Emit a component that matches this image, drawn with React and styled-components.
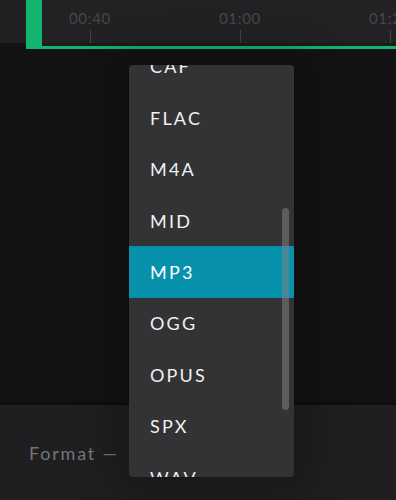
import React, { useLayoutEffect, useRef } from "react";
import styled, { createGlobalStyle } from "styled-components";

const GlobalStyle = createGlobalStyle`
  html, body {
    margin: 0;
    padding: 0;
    background: #131315;
  }
  * { box-sizing: border-box; }
`;

const Screen = styled.div`
  position: relative;
  width: 396px;
  height: 500px;
  display: flex;
  flex-direction: column;
  overflow: hidden;
  font-family: Lato, "Open Sans", sans-serif;
  background: #131315;
`;

const TopBar = styled.div`
  display: flex;
  height: 49px;
  flex-shrink: 0;
`;

const Gutter = styled.div`
  width: 26px;
  height: 43px;
  background: #212123;
`;

const Timeline = styled.div`
  flex: 1;
  overflow: hidden;
  background: #222224;
  border-left: 16px solid #12b56d;
  border-bottom: 3px solid #12b56d;
  box-shadow: inset 0 -3px 0 #1b1b1d;
  display: flex;
`;

const Ruler = styled.div`
  display: flex;
  margin-left: -177px;
`;

const Cell = styled.div`
  width: 150px;
  flex-shrink: 0;
  display: flex;
  flex-direction: column;
  align-items: center;
`;

const Stamp = styled.span`
  margin-top: 9px;
  font-size: 15px;
  letter-spacing: 0.7px;
  color: #474749;
  line-height: 18px;
`;

const Tick = styled.span`
  margin-top: 3px;
  width: 1px;
  height: 13px;
  background: #434345;
`;

const Stage = styled.div`
  flex: 1;
  background: #131315;
`;

const Panel = styled.div`
  height: 95px;
  flex-shrink: 0;
  background: #1f1f21;
  box-shadow: 0 -2px 3px rgba(0, 0, 0, 0.35);
  display: flex;
  align-items: center;
  padding-left: 29px;
`;

const Label = styled.span`
  font-size: 18px;
  letter-spacing: 1.8px;
  color: #767678;
`;

const Menu = styled.div`
  position: absolute;
  left: 129px;
  top: 65px;
  width: 165px;
  height: 412px;
  background: #333335;
  border-radius: 4px;
  box-shadow: 0 0 40px 14px rgba(0, 0, 0, 0.25);
  overflow: hidden;
`;

const List = styled.div`
  height: 100%;
  overflow: hidden;
`;

const Option = styled.div`
  height: 51.4px;
  display: flex;
  align-items: center;
  padding-left: 21px;
  font-size: 18px;
  letter-spacing: 2.2px;
  color: ${(p) => (p.$active ? "#ffffff" : "#f1f1f1")};
  background: ${(p) => (p.$active ? "#0891aa" : "transparent")};
`;

const Thumb = styled.div`
  position: absolute;
  left: 153px;
  top: 143px;
  width: 7px;
  height: 202px;
  border-radius: 4px;
  background: rgba(128, 128, 132, 0.55);
`;

const stamps = ["00:20", "00:40", "01:00", "01:20"];
const formats = ["AAC", "AIFF", "CAF", "FLAC", "M4A", "MID", "MP3", "OGG", "OPUS", "SPX", "WAV", "WMA"];

export default function App() {
  const listRef = useRef(null);

  useLayoutEffect(() => {
    if (listRef.current) listRef.current.scrollTop = 126.6;
  }, []);

  return (
    <Screen>
      <GlobalStyle />
      <TopBar>
        <Gutter />
        <Timeline>
          <Ruler>
            {stamps.map((s) => (
              <Cell key={s}>
                <Stamp>{s}</Stamp>
                <Tick />
              </Cell>
            ))}
          </Ruler>
        </Timeline>
      </TopBar>
      <Stage />
      <Panel>
        <Label>Format —</Label>
      </Panel>
      <Menu>
        <List ref={listRef}>
          {formats.map((f) => (
            <Option key={f} $active={f === "MP3"}>
              {f}
            </Option>
          ))}
        </List>
        <Thumb />
      </Menu>
    </Screen>
  );
}
